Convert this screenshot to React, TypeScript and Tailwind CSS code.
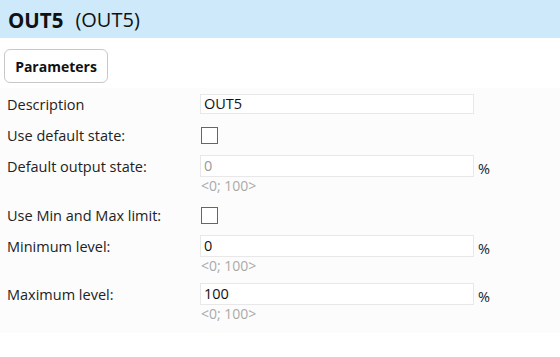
import React from "react";

type FieldProps = {
  label: string;
  value: string;
  muted?: boolean;
  unit?: boolean;
  hint?: string;
  short?: boolean;
  className?: string;
};

const Field: React.FC<FieldProps> = ({ label, value, muted, unit, hint, short, className }) => {
  return (
    <div className={className}>
      <div className="flex items-center">
        <span className="w-[200px] pl-[7px] pt-[1px] text-[14.5px] leading-[17px] text-[#222]">{label}</span>
        <div
          className={`w-[274px] border border-[#e8e8e8] bg-white pl-[3px] text-[14.5px] ${
            short ? "h-[20px] leading-[18px]" : "h-[22px] leading-[20px]"
          } ${muted ? "text-[#999]" : "text-[#111]"}`}
        >
          {value}
        </div>
        {unit && <span className="ml-[4px] mt-[4px] text-[14.5px] leading-[17px] text-[#222]">%</span>}
      </div>
      {hint && (
        <div className="ml-[201px] mt-[1px] text-[14px] leading-[16px] text-[#aaa]">{hint}</div>
      )}
    </div>
  );
};

const Check: React.FC<{ label: string; className?: string }> = ({ label, className }) => {
  return (
    <div className={`flex items-center h-[17px] ${className ?? ""}`}>
      <span className="w-[201px] pl-[7px] text-[14.5px] leading-[17px] text-[#222]">{label}</span>
      <div className="w-[17px] h-[17px] border border-[#666] bg-white" />
    </div>
  );
};

export default function App() {
  return (
    <div
      className="w-[560px] h-[357px] bg-white"
      style={{ fontFamily: '"Open Sans", "Noto Sans", sans-serif' }}
    >
      <div className="h-[38px] bg-[#cde9fa] flex items-center pl-[8px] pt-[2px]">
        <span className="text-[20.5px] font-bold text-[#111]">OUT5</span>
        <span className="ml-[12px] text-[20px] text-[#111]">(OUT5)</span>
      </div>

      <div className="pt-[11px] pl-[4px]">
        <button className="h-[34px] w-[104px] rounded-[6px] border border-[#c8c8c8] bg-white text-[14px] font-bold text-[#111]">
          Parameters
        </button>
      </div>

      <div className="mt-[5px] bg-[#fcfcfc] pt-[6px] h-[245px]">
        <Field label="Description" value="OUT5" short />
        <Check label="Use default state:" className="mt-[13px]" />
        <Field label="Default output state:" value="0" muted unit hint="<0; 100>" className="mt-[11px]" />
        <Check label="Use Min and Max limit:" className="mt-[13px]" />
        <Field label="Minimum level:" value="0" unit hint="<0; 100>" className="mt-[11px]" />
        <Field label="Maximum level:" value="100" unit hint="<0; 100>" className="mt-[9px]" />
      </div>
    </div>
  );
}
